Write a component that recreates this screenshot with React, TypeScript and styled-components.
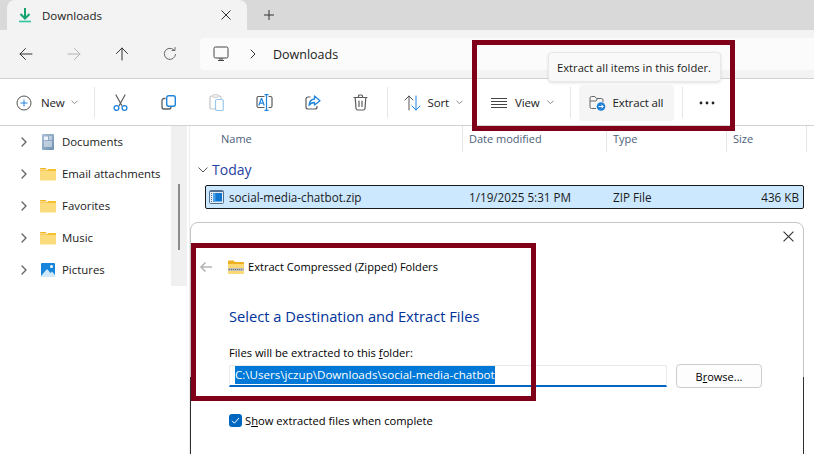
import React from "react";
import styled, { createGlobalStyle } from "styled-components";

const UI_FONT = `"Open Sans", "Noto Sans", "Liberation Sans", sans-serif`;
const MAROON = "#7f0018";

const GlobalStyle = createGlobalStyle`
  html, body {
    margin: 0;
    padding: 0;
    background: #ffffff;
  }
  * {
    box-sizing: border-box;
  }
`;

const Page = styled.div`
  position: relative;
  width: 814px;
  height: 454px;
  overflow: hidden;
  background: #ffffff;
  color: #1a1a1a;
  font-family: ${UI_FONT};
  font-size: 11.5px;
  display: flex;
  flex-direction: column;
`;

const TabStrip = styled.div`
  height: 30px;
  flex: none;
  background: #d9d9d9;
  padding-left: 7px;
  display: flex;
  align-items: stretch;
`;

const Tab = styled.div`
  width: 240px;
  background: #f3f3f3;
  border-radius: 8px 8px 0 0;
  display: flex;
  align-items: center;
  padding: 0 16px 0 11px;
  font-size: 11.5px;
`;

const TabTitle = styled.span`
  margin-left: 10px;
  flex: 1;
`;

const NewTab = styled.div`
  margin-left: 17px;
  display: flex;
  align-items: center;
`;

const NavBar = styled.div`
  height: 49px;
  flex: none;
  background: #f3f3f3;
  border-bottom: 1px solid #d2d2d2;
  display: flex;
  align-items: center;
  padding-left: 18px;
`;

const NavButton = styled.div`
  width: 16px;
  height: 16px;
  margin-right: 32px;
  display: flex;
`;

const AddressBox = styled.div`
  flex: 1;
  height: 32px;
  margin-left: -10px;
  background: #fbfbfb;
  border-radius: 4px 0 0 4px;
  display: flex;
  align-items: center;
  padding-left: 13px;
  font-size: 12.5px;
`;

const Crumb = styled.span<{ $gap: number }>`
  margin-left: ${(p) => p.$gap}px;
`;

const Toolbar = styled.div`
  height: 47px;
  flex: none;
  background: #ffffff;
  border-bottom: 1px solid #d2d2d2;
  display: flex;
  align-items: center;
  padding: 1px 0 0 16px;
`;

const ToolDivider = styled.div<{ $gap: number; $after: number }>`
  width: 1px;
  height: 31px;
  background: #e6e6e6;
  margin: 0 ${(p) => p.$after}px 0 ${(p) => p.$gap}px;
`;

const ToolIcon = styled.div`
  width: 18px;
  height: 18px;
  margin-right: 30px;
  display: flex;
  justify-content: center;
  align-items: center;
  flex: none;
`;

const ToolLabel = styled.span<{ $left: number }>`
  margin-left: ${(p) => p.$left}px;
  font-size: 11.5px;
  letter-spacing: -0.15px;
`;

const Caret = styled.div<{ $left: number }>`
  margin-left: ${(p) => p.$left}px;
  display: flex;
`;

const ExtractButton = styled.div`
  width: 95px;
  height: 36px;
  flex: none;
  background: #f5f5f5;
  border-radius: 4px;
  display: flex;
  align-items: center;
  padding-left: 10px;
`;

const Main = styled.div`
  flex: 1;
  display: flex;
  min-height: 0;
`;

const Sidebar = styled.nav`
  width: 171px;
  flex: none;
`;

const TreeRow = styled.div`
  height: 32px;
  display: flex;
  align-items: center;
  padding: 0 0 1px 20px;
  font-size: 11.4px;
`;

const TreeIcon = styled.div`
  margin-left: 12px;
  width: 16px;
  height: 16px;
  display: flex;
`;

const TreeLabel = styled.span`
  margin-left: 6px;
  white-space: nowrap;
`;

const ScrollTrack = styled.div`
  width: 16px;
  height: 160px;
  flex: none;
  background: #f0f0f0;
  padding: 58px 0 0 7px;
`;

const ScrollThumb = styled.div`
  width: 2px;
  height: 66px;
  background: #8b8b8b;
`;

const Listing = styled.section`
  flex: 1;
  margin-left: 2px;
  border-left: 1px solid #ececec;
`;

const ColumnHeader = styled.div`
  height: 26px;
  display: grid;
  grid-template-columns: 273px 144px 120px 80px;
  color: #4c607a;
  font-size: 11px;
`;

const ColumnCell = styled.div<{ $first?: boolean }>`
  padding-left: ${(p) => (p.$first ? 31 : 6)}px;
  border-right: 1px solid #e5e5e5;
  padding-top: 5px;
`;

const GroupTitle = styled.div`
  height: 33px;
  display: flex;
  align-items: center;
  padding: 2px 0 0 8px;
  color: #1f3fa3;
  font-size: 14px;
`;

const GroupName = styled.span`
  margin-left: 4px;
`;

const FileRow = styled.div`
  margin-left: 15px;
  width: 599px;
  height: 24px;
  background: #cce8ff;
  border: 1px solid #1a1a1a;
  border-radius: 2px;
  display: grid;
  grid-template-columns: 263px 144px 120px 1fr;
  align-items: center;
  font-size: 11.7px;
`;

const FileName = styled.div`
  display: flex;
  align-items: center;
  padding-left: 3px;
  gap: 5px;
`;

const FileSize = styled.div`
  text-align: right;
  padding-right: 4px;
`;

const DialogWindow = styled.div`
  position: absolute;
  left: 190px;
  top: 222px;
  width: 614px;
  height: 240px;
  background: #ffffff;
  border: 1px solid #c4c4c4;
  border-radius: 8px 8px 0 0;
  display: flex;
  flex-direction: column;
  color: #000000;
  &::before,
  &::after {
    content: "";
    position: absolute;
    top: 154px;
    bottom: 0;
    width: 1px;
    background: #2f2f2f;
  }
  &::before {
    left: -1px;
  }
  &::after {
    right: -1px;
  }
`;

const DialogClose = styled.div`
  height: 27px;
  flex: none;
  display: flex;
  justify-content: flex-end;
  align-items: center;
  padding-right: 9px;
`;

const DialogTitleBar = styled.div`
  height: 33px;
  display: flex;
  align-items: center;
  padding-left: 8px;
  font-size: 11.1px;
`;

const DialogFolder = styled.div`
  margin-left: 15px;
  margin-right: 4px;
  display: flex;
`;

const DialogBody = styled.div`
  padding-left: 38px;
  display: flex;
  flex-direction: column;
`;

const DialogHeading = styled.h2`
  margin: 21px 0 0;
  height: 24px;
  font-weight: 400;
  font-size: 14.7px;
  line-height: 24px;
  color: #003399;
`;

const FieldLabel = styled.label`
  margin-top: 17px;
  height: 16px;
  line-height: 16px;
  font-size: 11.2px;
`;

const FieldRow = styled.div`
  margin-top: 4px;
  display: flex;
  align-items: flex-start;
`;

const PathInput = styled.div`
  width: 438px;
  height: 22px;
  border: 1px solid #e7eaee;
  border-bottom: 2px solid #0067c0;
  padding: 0 0 0 5px;
  font-size: 11.6px;
  line-height: 18px;
`;

const Selected = styled.span`
  background: #0078d7;
  color: #ffffff;
  display: inline-block;
  white-space: nowrap;
`;

const BrowseButton = styled.div`
  margin: -1px 0 0 9px;
  width: 86px;
  height: 24px;
  background: #fdfdfd;
  border: 1px solid #cccccc;
  border-radius: 4px;
  font-size: 11px;
  display: flex;
  justify-content: center;
  align-items: center;
`;

const CheckRow = styled.div`
  margin-top: 25px;
  display: flex;
  align-items: center;
  font-size: 11.2px;
`;

const CheckBox = styled.div`
  width: 13px;
  height: 13px;
  background: #0067c0;
  border-radius: 3px;
  display: flex;
  margin-right: 3px;
`;

const Key = styled.span`
  text-decoration: underline;
`;

const Tooltip = styled.div`
  position: absolute;
  left: 548px;
  top: 52px;
  width: 173px;
  height: 30px;
  background: #f9f9f9;
  border: 1px solid #e8e8e8;
  border-radius: 4px;
  box-shadow: 0 1px 3px rgba(0, 0, 0, 0.12);
  padding-left: 8px;
  display: flex;
  align-items: center;
  font-size: 11.2px;
  white-space: nowrap;
`;

const Callout = styled.div<{ $x: number; $y: number; $w: number; $h: number }>`
  position: absolute;
  left: ${(p) => p.$x}px;
  top: ${(p) => p.$y}px;
  width: ${(p) => p.$w}px;
  height: ${(p) => p.$h}px;
  border: 5px solid ${MAROON};
  pointer-events: none;
`;

const Line = ({ d, c = "#333", w = 1 }: { d: string; c?: string; w?: number }) => (
  <path d={d} fill="none" stroke={c} strokeWidth={w} strokeLinecap="round" strokeLinejoin="round" />
);

const BLUE = "#1f84dc";
const GREY = "#5c5c5c";

const DownloadIcon = () => (
  <svg width="14" height="16" viewBox="0 0 14 16">
    <path d="M7 1v10M2.5 7 7 11.5 11.5 7" fill="none" stroke="#15a36f" strokeWidth="2" />
    <path d="M1 14.5h12" stroke="#2cc5a0" strokeWidth="1.6" />
  </svg>
);

const CloseIcon = ({ size = 10 }: { size?: number }) => (
  <svg width={size} height={size} viewBox="0 0 10 10">
    <path d="M.5.5l9 9M9.5.5l-9 9" stroke="#333" strokeWidth="1" />
  </svg>
);

const PlusIcon = () => (
  <svg width="10" height="10" viewBox="0 0 10 10">
    <path d="M5 0v10M0 5h10" stroke="#333" strokeWidth="1" />
  </svg>
);

const ArrowIcon = ({ turn = 0, color = "#333" }: { turn?: number; color?: string }) => (
  <svg width="16" height="16" viewBox="0 0 16 16" style={{ transform: `rotate(${turn}deg)` }}>
    <Line d="M2 8h12M7.5 2.5 2 8l5.5 5.5" c={color} />
  </svg>
);

const RefreshIcon = () => (
  <svg width="16" height="16" viewBox="0 0 16 16">
    <Line d="M13.5 8.5A5.6 5.6 0 1 1 11.5 3.5M13 1.5v3h-3" c="#666" />
  </svg>
);

const MonitorIcon = () => (
  <svg width="16" height="16" viewBox="0 0 16 16">
    <rect x="1" y="1" width="14" height="11" rx="1.5" fill="#fbfbfb" stroke="#444" />
    <path d="M5 14.5h6M7 12v2.5M9 12v2.5" stroke="#444" />
  </svg>
);

const ChevronRightIcon = ({ color = "#555", w = 1 }: { color?: string; w?: number }) => (
  <svg width="8" height="10" viewBox="0 0 8 10">
    <Line d="M2 1l4 4-4 4" c={color} w={w} />
  </svg>
);

const CaretIcon = () => (
  <svg width="7" height="5" viewBox="0 0 7 5">
    <Line d="M.8 1l2.7 2.7L6.2 1" c="#888" />
  </svg>
);

const NewIcon = () => (
  <svg width="16" height="16" viewBox="0 0 16 16">
    <circle cx="8" cy="8" r="7" fill="none" stroke="#555" />
    <path d="M8 4.5v7M4.500 8h7" stroke={BLUE} />
  </svg>
);

const CutIcon = () => (
  <svg width="15" height="18" viewBox="0 0 15 18">
    <Line d="M3 1l5.800 10.500M12 1 6.200 11.500" c={GREY} w={1.2} />
    <circle cx="3.500" cy="14" r="2.400" fill="none" stroke={BLUE} strokeWidth="1.300" />
    <circle cx="11.500" cy="14" r="2.400" fill="none" stroke={BLUE} strokeWidth="1.300" />
  </svg>
);

const CopyIcon = () => (
  <svg width="15" height="15" viewBox="0 0 15 15">
    <path d="M4.500 3.500H3A2 2 0 0 0 1 5.500V12a2 2 0 0 0 2 2h5a2 2 0 0 0 2-2" fill="none" stroke={GREY} strokeWidth="1.300" />
    <rect x="5.700" y=".7" width="8.600" height="10.600" rx="2" fill="#fff" stroke={BLUE} strokeWidth="1.400" />
  </svg>
);

const PasteIcon = () => (
  <svg width="15" height="17" viewBox="0 0 15 17">
    <path d="M3.500 2H2.500A1.500 1.500 0 0 0 1 3.500v10A1.500 1.500 0 0 0 2.500 15H6M9.500 2h1A1.500 1.500 0 0 1 12 3.500V5" fill="none" stroke="#c4c4c4" strokeWidth="1.200" />
    <rect x="3.500" y=".8" width="6" height="2.400" rx="1" fill="#fff" stroke="#c4c4c4" />
    <rect x="6.500" y="5.500" width="7.800" height="11" rx="1.500" fill="#fff" stroke="#9cc8ee" strokeWidth="1.200" />
  </svg>
);

const RenameIcon = () => (
  <svg width="17" height="17" viewBox="0 0 17 17">
    <path d="M8.500 2.500H2.500A1.500 1.500 0 0 0 1 4v8a1.500 1.500 0 0 0 1.500 1.500H8.500M12.500 2.500h2A1.500 1.500 0 0 1 16 4v8a1.500 1.500 0 0 1-1.500 1.500h-2" fill="none" stroke={GREY} strokeWidth="1.200" />
    <path d="M2.800 11.500 5.300 4.500h.4l2.500 7M3.800 9.200h3.400" fill="none" stroke={BLUE} strokeWidth="1.200" />
    <path d="M8.500.6h4M8.500 16.400h4M10.500.6v15.800" fill="none" stroke={BLUE} strokeWidth="1.200" />
  </svg>
);

const ShareIcon = () => (
  <svg width="16" height="15" viewBox="0 0 16 15">
    <path d="M5.500 2H3A2 2 0 0 0 1 4v8a2 2 0 0 0 2 2h7a2 2 0 0 0 2-2v-1" fill="none" stroke={GREY} strokeWidth="1.200" />
    <path d="M9.500 1 15 5.700 9.500 10V7.500C7 7.500 5.200 8.500 4 10.500 4.200 6.800 6.300 4.300 9.500 4Z" fill="none" stroke={BLUE} strokeWidth="1.300" strokeLinejoin="round" />
  </svg>
);

const TrashIcon = () => (
  <svg width="15" height="17" viewBox="0 0 15 17">
    <Line d="M1 3.500h13M5.500 3.500V2a1 1 0 0 1 1-1h2a1 1 0 0 1 1 1v1.500M2.200 3.500 3 14.500A1.800 1.800 0 0 0 4.800 16h5.400a1.800 1.800 0 0 0 1.800-1.500l.8-11M6 7v5.500M9 7v5.500" c={GREY} w={1.2} />
  </svg>
);

const SortIcon = () => (
  <svg width="17" height="16" viewBox="0 0 17 16">
    <Line d="M5 15V1M1 5l4-4 4 4" c="#555" />
    <Line d="M12 1v14M8 11l4 4 4-4" c={BLUE} />
  </svg>
);

const ViewIcon = () => (
  <svg width="16" height="10" viewBox="0 0 16 10">
    <path d="M0 .5h16M0 3.500h16M0 6.500h16M0 9.500h16" stroke="#444" />
  </svg>
);

const ExtractIcon = () => (
  <svg width="17" height="16" viewBox="0 0 17 16">
    <path d="M7 13.500H2.500A1.500 1.500 0 0 1 1 12V3a1.500 1.500 0 0 1 1.500-1.500h3.300L7.500 3.500h5A1.500 1.500 0 0 1 14 5v2" fill="none" stroke="#666" />
    <path d="M1 6h6l1.500-2.500" fill="none" stroke="#666" />
    <circle cx="12" cy="11.500" r="4.300" fill="#1f7fd6" />
    <path d="M9.700 11.500h4.400M12.400 9.700l1.800 1.800-1.800 1.800" fill="none" stroke="#fff" />
  </svg>
);

const DotsIcon = () => (
  <svg width="16" height="4" viewBox="0 0 16 4">
    <circle cx="2" cy="2" r="1.400" fill="#222" />
    <circle cx="8" cy="2" r="1.400" fill="#222" />
    <circle cx="14" cy="2" r="1.400" fill="#222" />
  </svg>
);

const DocumentsIcon = () => (
  <svg width="16" height="16" viewBox="0 0 16 16">
    <defs>
      <linearGradient id="docFill" x1="0" y1="0" x2="1" y2="1">
        <stop offset="0" stopColor="#a9bfd6" />
        <stop offset="1" stopColor="#6f8fb2" />
      </linearGradient>
    </defs>
    <rect x="2" y="0" width="12" height="16" rx="1" fill="url(#docFill)" />
    <rect x="4" y="2.500" width="4" height="3.500" fill="#f0f4f8" />
    <path d="M9 3h3M9 5h3M4 8h8M4 10h8M4 12h8" stroke="#f0f4f8" />
  </svg>
);

const FolderIcon = () => (
  <svg width="16" height="16" viewBox="0 0 16 16">
    <path d="M0 3a1 1 0 0 1 1-1h4.500L7 3.500H0Z" fill="#f2b21c" />
    <path d="M0 4h7l1.500-1H15a1 1 0 0 1 1 1v9.500a1 1 0 0 1-1 1H1a1 1 0 0 1-1-1Z" fill="#fbdb7c" />
    <path d="M0 4.500h7L8.500 3H15a1 1 0 0 1 1 1v1H0Z" fill="#f6bf2c" />
  </svg>
);

const PicturesIcon = () => (
  <svg width="16" height="16" viewBox="0 0 16 16">
    <rect x="1" y="1" width="14" height="14" rx="1" fill="#1686dd" />
    <circle cx="11.500" cy="4.500" r="1.500" fill="#ffffff" />
    <path d="M1 14 7 7l3.500 4 1.500-1.500 3 3.500V15H1Z" fill="#cfe9fb" />
  </svg>
);

const ZipFileIcon = () => (
  <svg width="15" height="14" viewBox="0 0 15 14">
    <rect x=".5" y=".5" width="14" height="13" rx="1" fill="#e4edf5" stroke="#54708e" />
    <path d="M1 1.500h13" stroke="#54708e" />
    <path d="M2.500 3v9" stroke="#54708e" strokeDasharray="1 1" />
    <rect x="4" y="3" width="9" height="8.500" fill="#1277cf" />
    <rect x="4" y="3" width="2.500" height="8.500" fill="#4aa3e8" />
  </svg>
);

const ZipFolderIcon = () => (
  <svg width="16" height="14" viewBox="0 0 16 14">
    <path d="M0 1.500A1 1 0 0 1 1 .5h4.500L7 2h8a1 1 0 0 1 1 1v1H0Z" fill="#eeaf22" />
    <path d="M0 4h16v9a1 1 0 0 1-1 1H1a1 1 0 0 1-1-1Z" fill="#fbd975" />
    <path d="M0 8h16v3H0Z" fill="#bdbdbd" />
    <path d="M1 9.500h14" stroke="#6e6e6e" strokeDasharray="1 1" />
  </svg>
);

const DialogBackIcon = () => (
  <svg width="14" height="12" viewBox="0 0 14 12">
    <path d="M13 6H2M6.500 1.500 2 6l4.500 4.500" fill="none" stroke="#b5b5b5" strokeWidth="1.600" />
  </svg>
);

const CheckIcon = () => (
  <svg width="13" height="13" viewBox="0 0 13 13">
    <path d="M3 6.800 5.400 9.200 10 4" fill="none" stroke="#ffffff" />
  </svg>
);

const treeItems = [
  { label: "Documents", icon: <DocumentsIcon /> },
  { label: "Email attachments", icon: <FolderIcon /> },
  { label: "Favorites", icon: <FolderIcon /> },
  { label: "Music", icon: <FolderIcon /> },
  { label: "Pictures", icon: <PicturesIcon /> },
];

function App() {
  return (
    <Page>
      <GlobalStyle />
      <TabStrip>
        <Tab>
          <DownloadIcon />
          <TabTitle>Downloads</TabTitle>
          <CloseIcon />
        </Tab>
        <NewTab>
          <PlusIcon />
        </NewTab>
      </TabStrip>

      <NavBar>
        <NavButton>
          <ArrowIcon />
        </NavButton>
        <NavButton>
          <ArrowIcon turn={180} color="#b4b4b4" />
        </NavButton>
        <NavButton>
          <ArrowIcon turn={90} />
        </NavButton>
        <NavButton>
          <RefreshIcon />
        </NavButton>
        <AddressBox>
          <MonitorIcon />
          <Crumb $gap={20}>
            <ChevronRightIcon color="#333" />
          </Crumb>
          <Crumb $gap={16}>Downloads</Crumb>
        </AddressBox>
      </NavBar>

      <Toolbar>
        <NewIcon />
        <ToolLabel $left={9}>New</ToolLabel>
        <Caret $left={6}>
          <CaretIcon />
        </Caret>
        <ToolDivider $gap={16} $after={17} />
        <ToolIcon>
          <CutIcon />
        </ToolIcon>
        <ToolIcon>
          <CopyIcon />
        </ToolIcon>
        <ToolIcon>
          <PasteIcon />
        </ToolIcon>
        <ToolIcon>
          <RenameIcon />
        </ToolIcon>
        <ToolIcon>
          <ShareIcon />
        </ToolIcon>
        <ToolIcon>
          <TrashIcon />
        </ToolIcon>
        <ToolDivider $gap={-13} $after={16} />
        <SortIcon />
        <ToolLabel $left={7}>Sort</ToolLabel>
        <Caret $left={7}>
          <CaretIcon />
        </Caret>
        <ToolDivider $gap={9} $after={18} />
        <ViewIcon />
        <ToolLabel $left={8}>View</ToolLabel>
        <Caret $left={7}>
          <CaretIcon />
        </Caret>
        <ToolDivider $gap={16} $after={8} />
        <ExtractButton>
          <ExtractIcon />
          <ToolLabel $left={7}>Extract all</ToolLabel>
        </ExtractButton>
        <ToolDivider $gap={8} $after={16} />
        <DotsIcon />
      </Toolbar>

      <Main>
        <Sidebar>
          {treeItems.map((item) => (
            <TreeRow key={item.label}>
              <ChevronRightIcon color="#666" w={1.4} />
              <TreeIcon>{item.icon}</TreeIcon>
              <TreeLabel>{item.label}</TreeLabel>
            </TreeRow>
          ))}
        </Sidebar>
        <ScrollTrack>
          <ScrollThumb />
        </ScrollTrack>
        <Listing>
          <ColumnHeader>
            <ColumnCell $first>Name</ColumnCell>
            <ColumnCell>Date modified</ColumnCell>
            <ColumnCell>Type</ColumnCell>
            <ColumnCell>Size</ColumnCell>
          </ColumnHeader>
          <GroupTitle>
            <svg width="10" height="6" viewBox="0 0 10 6">
              <Line d="M.8.8 5 5 9.200.8" c="#555" />
            </svg>
            <GroupName>Today</GroupName>
          </GroupTitle>
          <FileRow>
            <FileName>
              <ZipFileIcon />
              social-media-chatbot.zip
            </FileName>
            <div>1/19/2025 5:31 PM</div>
            <div>ZIP File</div>
            <FileSize>436 KB</FileSize>
          </FileRow>
        </Listing>
      </Main>

      <DialogWindow>
        <DialogClose>
          <CloseIcon size={11} />
        </DialogClose>
        <DialogTitleBar>
          <DialogBackIcon />
          <DialogFolder>
            <ZipFolderIcon />
          </DialogFolder>
          Extract Compressed (Zipped) Folders
        </DialogTitleBar>
        <DialogBody>
          <DialogHeading>Select a Destination and Extract Files</DialogHeading>
          <FieldLabel>
            Files will be extracted to this <Key>f</Key>older:
          </FieldLabel>
          <FieldRow>
            <PathInput>
              <Selected>C:\Users\jczup\Downloads\social-media-chatbot</Selected>
            </PathInput>
            <BrowseButton>
              B<Key>r</Key>owse...
            </BrowseButton>
          </FieldRow>
          <CheckRow>
            <CheckBox>
              <CheckIcon />
            </CheckBox>
            <span>
              S<Key>h</Key>ow extracted files when complete
            </span>
          </CheckRow>
        </DialogBody>
      </DialogWindow>

      <Tooltip>Extract all items in this folder.</Tooltip>
      <Callout $x={472} $y={40} $w={263} $h={91} />
      <Callout $x={191} $y={243} $w={345} $h={158} />
    </Page>
  );
}

export default App;
